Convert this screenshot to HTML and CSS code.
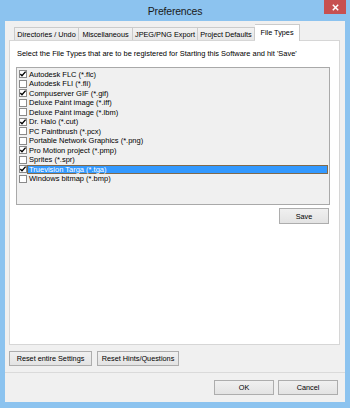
FILE: index.html
```html
<!DOCTYPE html>
<html>
<head>
<meta charset="utf-8">
<link rel="stylesheet" href="styles.css">
</head>
<body>
<div class="window">
  <div class="titlebar">
    <span class="title">Preferences</span>
    <div class="close">
      <svg width="7" height="7" viewBox="0 0 7 7"><path d="M0.8 0.8 L6.2 6.2 M6.2 0.8 L0.8 6.2" stroke="#fff" stroke-width="1.5"/></svg>
    </div>
  </div>
  <div class="client">
    <div class="tabs">
      <div class="tab w1">Directories / Undo</div>
      <div class="tab w2">Miscellaneous</div>
      <div class="tab w3">JPEG/PNG Export</div>
      <div class="tab w4">Project Defaults</div>
      <div class="tab sel">File Types</div>
    </div>
    <div class="panel">
      <div class="intro">Select the File Types that are to be registered for Starting this Software and hit 'Save'</div>
      <div class="listbox">
        <div class="row"><span class="cb on"><svg viewBox="0 0 8 8"><polyline points="1.3,3.9 3,5.7 6.6,1.6" /></svg></span><span class="lbl">Autodesk FLC (*.flc)</span></div>
        <div class="row"><span class="cb"></span><span class="lbl">Autodesk FLI (*.fli)</span></div>
        <div class="row"><span class="cb on"><svg viewBox="0 0 8 8"><polyline points="1.3,3.9 3,5.7 6.6,1.6" /></svg></span><span class="lbl">Compuserver GIF (*.gif)</span></div>
        <div class="row"><span class="cb"></span><span class="lbl">Deluxe Paint image (*.iff)</span></div>
        <div class="row"><span class="cb"></span><span class="lbl">Deluxe Paint image (*.lbm)</span></div>
        <div class="row"><span class="cb on"><svg viewBox="0 0 8 8"><polyline points="1.3,3.9 3,5.7 6.6,1.6" /></svg></span><span class="lbl">Dr. Halo (*.cut)</span></div>
        <div class="row"><span class="cb"></span><span class="lbl">PC Paintbrush (*.pcx)</span></div>
        <div class="row"><span class="cb"></span><span class="lbl">Portable Network Graphics (*.png)</span></div>
        <div class="row"><span class="cb on"><svg viewBox="0 0 8 8"><polyline points="1.3,3.9 3,5.7 6.6,1.6" /></svg></span><span class="lbl">Pro Motion project (*.pmp)</span></div>
        <div class="row"><span class="cb"></span><span class="lbl">Sprites (*.spr)</span></div>
        <div class="row"><span class="cb on"><svg viewBox="0 0 8 8"><polyline points="1.3,3.9 3,5.7 6.6,1.6" /></svg></span><span class="lbl hl">Truevision Targa (*.tga)</span></div>
        <div class="row"><span class="cb"></span><span class="lbl">Windows bitmap (*.bmp)</span></div>
      </div>
      <div class="saverow"><button class="btn save">Save</button></div>
    </div>
    <div class="resetrow">
      <button class="btn reset1">Reset entire Settings</button>
      <button class="btn reset2">Reset Hints/Questions</button>
    </div>
    <div class="footer">
      <button class="btn okc">OK</button>
      <button class="btn okc">Cancel</button>
    </div>
  </div>
</div>
</body>
</html>
```
FILE: styles.css
```css
html, body {
  margin: 0;
  padding: 0;
  background: #8cc3ef;
}
.window {
  width: 350px;
  height: 408px;
  box-sizing: border-box;
  background: #8cc3ef;
  padding: 0 5px 6px 5px;
  font-family: "Liberation Sans", Arial, sans-serif;
  font-size: 7.3px;
  color: #000;
  position: relative;
}
.titlebar {
  height: 21px;
  display: flex;
  align-items: center;
  justify-content: center;
}
.title {
  font-size: 10.5px;
  color: #1a1a1a;
  letter-spacing: -0.2px;
  margin-top: 1px;
}
.close {
  position: absolute;
  top: 0;
  right: 4px;
  width: 22px;
  height: 14px;
  background: #c75050;
  display: flex;
  align-items: center;
  justify-content: center;
}
.close svg { display: block; }
.client {
  height: 381px;
  background: #f0f0f0;
  padding: 6px 0 0 4px;
  box-sizing: border-box;
}
.tabs {
  display: flex;
  align-items: flex-end;
  height: 13px;
  margin-left: 5px;
}
.tab {
  height: 13px;
  box-sizing: border-box;
  border: 1px solid #cbcbcb;
  border-bottom: none;
  border-right: none;
  background: linear-gradient(#f2f2f2, #e6e6e6);
  display: flex;
  align-items: center;
  justify-content: center;
  white-space: nowrap;
}
.w1 { width: 64px; }
.w2 { width: 54px; }
.w3 { width: 65px; }
.w4 { width: 58px; border-right: 1px solid #cbcbcb; }
.tab.sel {
  width: 45px;
  height: 17px;
  margin-bottom: -1px;
  background: #fff;
  border-right: 1px solid #cbcbcb;
  border-left: none;
  position: relative;
  z-index: 1;
  align-items: flex-start;
  padding-top: 3px;
}
.panel {
  width: 331px;
  height: 305px;
  box-sizing: border-box;
  background: #fff;
  border: 1px solid #d6d6d6;
  padding: 8px 0 0 6px;
}
.intro {
  height: 10px;
  line-height: 10px;
  margin-left: 1px;
  white-space: nowrap;
  font-size: 7.45px;
}
.listbox {
  margin-top: 8px;
  width: 314px;
  height: 138px;
  box-sizing: border-box;
  border: 1px solid #a9a9a9;
  background: #f0f0f0;
  padding-top: 1.5px;
  font-size: 7.5px;
}
.row {
  height: 9.5px;
  display: flex;
  align-items: center;
}
.cb {
  width: 8px;
  height: 8px;
  box-sizing: border-box;
  margin-left: 2px;
  border: 1px solid #8a8a8a;
  background: #fff;
  display: flex;
}
.cb svg {
  width: 8px;
  height: 8px;
  margin: -1px;
  fill: none;
  stroke: #000;
  stroke-width: 1.4;
}
.lbl {
  flex: 1;
  height: 9.5px;
  line-height: 9.5px;
  padding-left: 2px;
  margin-right: 1px;
  white-space: nowrap;
}
.lbl.hl {
  background: #3399ff;
  color: #fff;
  box-shadow: inset 0 0 0 1px #806a4c;
}
.saverow {
  width: 314px;
  display: flex;
  justify-content: flex-end;
  margin-top: 3px;
}
.btn {
  font-family: "Liberation Sans", Arial, sans-serif;
  font-size: 7.3px;
  color: #000;
  height: 16px;
  box-sizing: border-box;
  border: 1px solid #adadad;
  background: linear-gradient(#f0f0f0, #e3e3e3);
  padding: 0;
  margin: 0;
  white-space: nowrap;
}
.save {
  width: 50px;
  margin-right: 1px;
}
.resetrow {
  display: flex;
  gap: 5px;
  margin-top: 6px;
}
.resetrow .btn { height: 15px; }
.reset1 { width: 83px; }
.reset2 { width: 82px; }
.footer {
  margin-top: 6px;
  margin-left: -4px;
  border-top: 1px solid #dadada;
  padding: 7px 7px 0 0;
  display: flex;
  justify-content: flex-end;
  gap: 4px;
}
.okc {
  width: 60px;
  height: 15px;
}
```
